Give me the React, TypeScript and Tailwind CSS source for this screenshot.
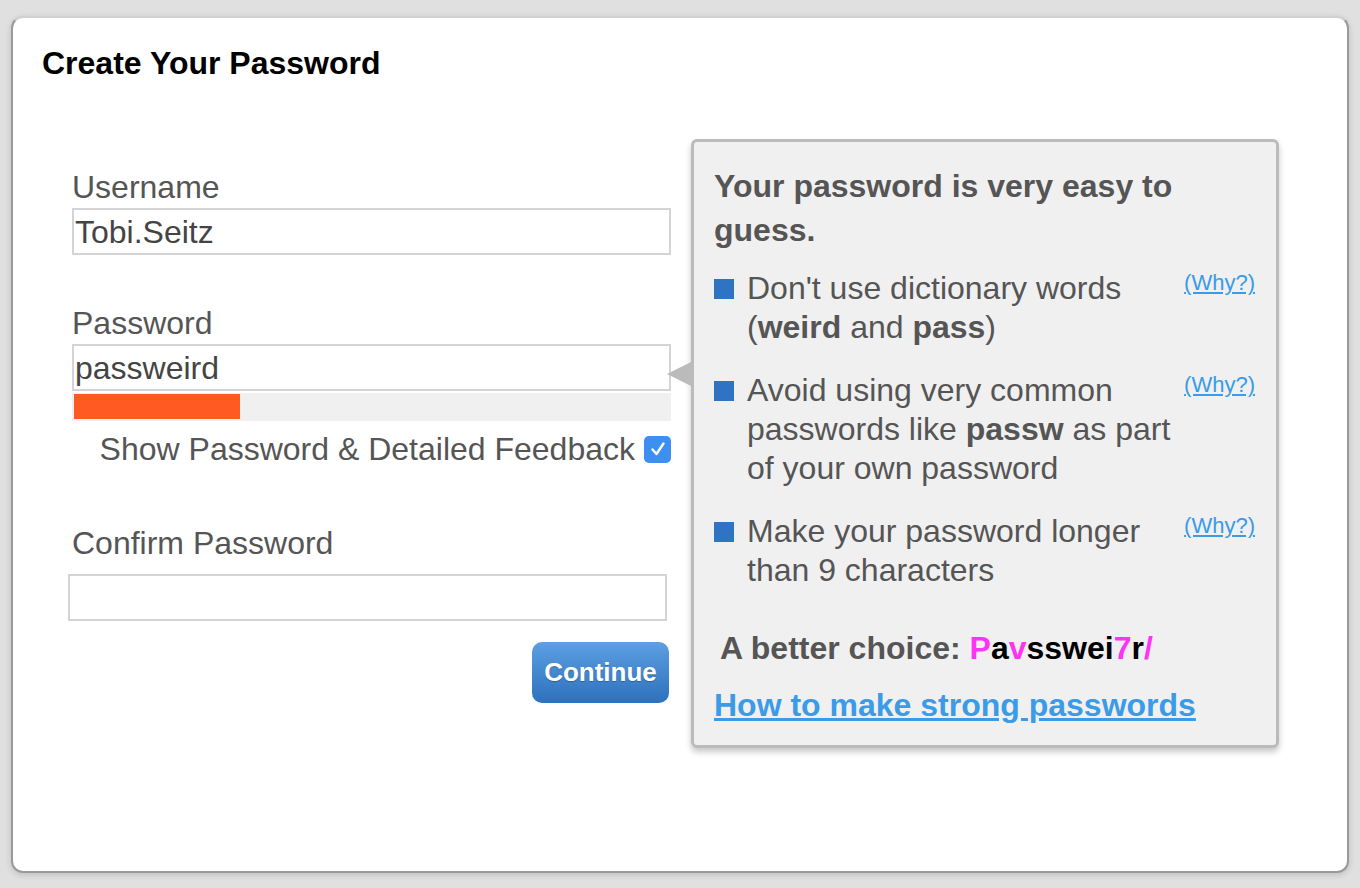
import React from "react";

const tips = [
  {
    body: (
      <>
        Don't use dictionary words (<b>weird</b> and <b>pass</b>)
      </>
    ),
  },
  {
    body: (
      <>
        Avoid using very common passwords like <b>passw</b> as part of your own password
      </>
    ),
  },
  {
    body: <>Make your password longer than 9 characters</>,
  },
];

function Field({ label, value, shift }: { label: string; value?: string; shift?: boolean }) {
  return (
    <div className="flex flex-col">
      <label className="text-[32px] leading-[40px] text-[#555]">{label}</label>
      <div
        className={`mt-[1px] flex h-[47px] w-[599px] items-center border-2 border-[#d4d4d4] bg-white pl-[1px] text-[32px] text-[#444] ${shift ? "ml-[-4px] mt-[11px]" : ""}`}
      >
        {value}
      </div>
    </div>
  );
}

export default function App() {
  return (
    <div className="min-h-[888px] bg-[#e0e0e0] px-[11px] pb-[15px] pt-[16px] font-['Liberation_Sans',Arial,sans-serif]">
      <div className="h-[857px] rounded-[12px] border-2 border-[#9a9a9a] border-t-[#d0d0d0] bg-white px-[29px] pt-[25px] shadow-[0_2px_6px_rgba(0,0,0,0.15)]">
        <h1 className="text-[32px] font-bold leading-[40px] text-black">Create Your Password</h1>

        <div className="mt-[56px] flex items-start">
          {/* form column */}
          <div className="ml-[30px] mt-[28px] flex w-[599px] flex-col">
            <Field label="Username" value="Tobi.Seitz" />

            <div className="mt-[48px]">
              <Field label="Password" value="passweird" />
            </div>
            <div className="mt-[2px] h-[28px] w-[599px] bg-[#f0f0f0] px-[2px] py-[1px]">
              <div className="h-[25px] w-[166px] bg-[#ff5a22]" />
            </div>

            <div className="mt-[8px] flex h-[40px] items-center justify-end gap-[9px]">
              <span className="text-[32px] text-[#555]">Show Password &amp; Detailed Feedback</span>
              <span className="grid h-[27px] w-[27px] place-items-center rounded-[5px] bg-[#3d8ff1]">
                <svg width="18" height="18" viewBox="0 0 18 18" fill="none">
                  <path d="M3.5 9.5 L7.5 14 L14.5 3.5" stroke="white" strokeWidth="2.4" strokeLinecap="round" strokeLinejoin="round" />
                </svg>
              </span>
            </div>

            <div className="mt-[54px]">
              <Field label="Confirm Password" shift />
            </div>

            <button className="mr-[2px] mt-[21px] h-[61px] w-[137px] self-end rounded-[10px] bg-gradient-to-b from-[#5c9fe2] to-[#2d71bc] text-[26px] font-bold text-white [text-shadow:0_1px_1px_rgba(0,0,0,0.25)]">
              Continue
            </button>
          </div>

          {/* feedback popup */}
          <div className="relative ml-[20px] w-[588px] rounded-[6px] border-[3px] border-[#bbbbbb] bg-[#f0f0f0] pb-[20px] pl-[20px] pr-[21px] pt-[22px] shadow-[0_4px_6px_rgba(0,0,0,0.22)]">
            <span className="absolute left-[-27px] top-[220px] h-0 w-0 border-y-[12px] border-r-[24px] border-y-transparent border-r-[#bbbbbb]" />

            <p className="text-[32px] font-bold leading-[44px] text-[#555]">Your password is very easy to guess.</p>

            <ul className="mt-[17px] flex flex-col gap-[24px]">
              {tips.map((tip, i) => (
                <li key={i} className="flex items-start">
                  <span className="mt-[10px] h-[20px] w-[20px] shrink-0 bg-[#2e74c2]" />
                  <p className="ml-[13px] w-[435px] text-[32px] leading-[39px] text-[#555]">{tip.body}</p>
                  <a className="ml-auto mt-[-1px] text-[22px] leading-[30px] text-[#3a9be8] underline">(Why?)</a>
                </li>
              ))}
            </ul>

            <p className="ml-[6px] mt-[38px] text-[32px] font-bold leading-[40px] text-[#555]">
              A better choice:{" "}
              <span className="text-[#ff33f5]">P</span>
              <span className="text-black">a</span>
              <span className="text-[#ff33f5]">v</span>
              <span className="text-black">sswei</span>
              <span className="text-[#ff33f5]">7</span>
              <span className="text-black">r</span>
              <span className="text-[#ff33f5]">/</span>
            </p>

            <a className="mt-[17px] block text-[32px] font-bold leading-[40px] text-[#3a9be8] underline">How to make strong passwords</a>
          </div>
        </div>
      </div>
    </div>
  );
}
